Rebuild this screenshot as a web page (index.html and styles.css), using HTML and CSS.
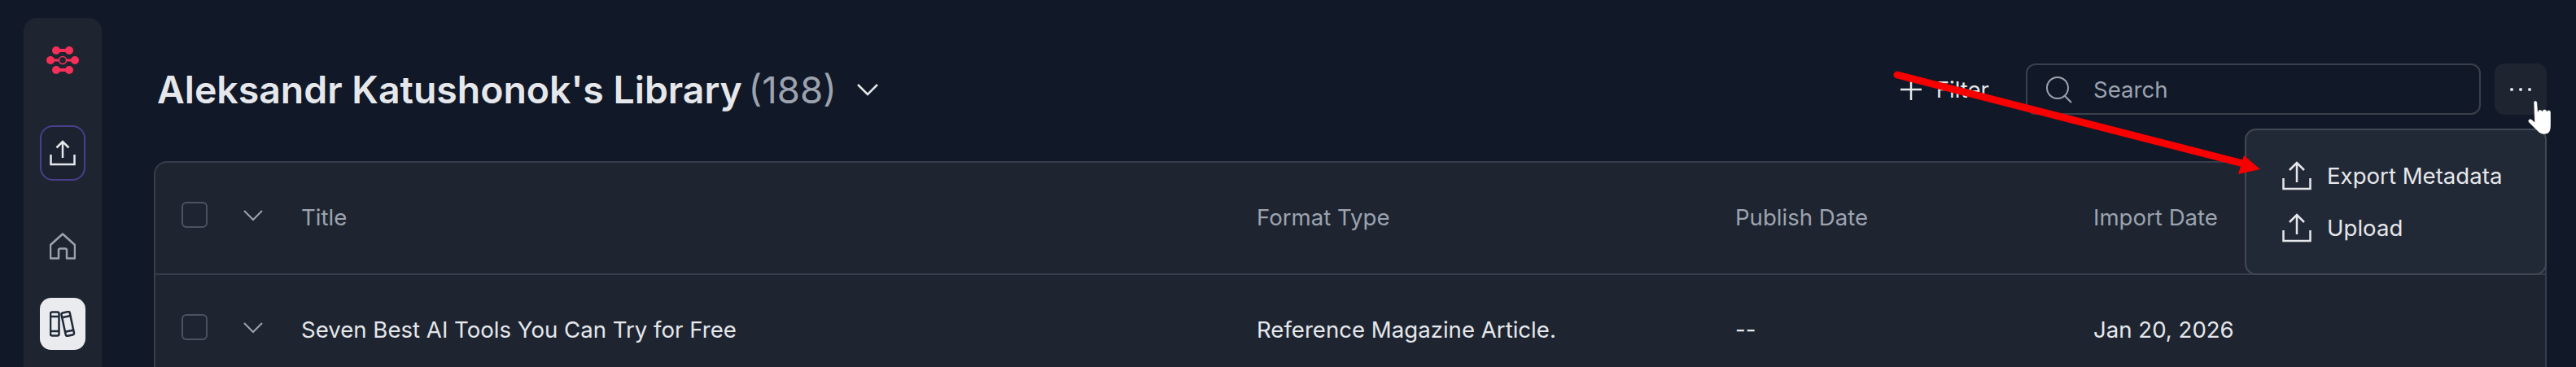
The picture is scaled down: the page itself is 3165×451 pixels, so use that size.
FILE: index.html
```html
<!DOCTYPE html>
<html lang="en">
<head>
    <meta charset="UTF-8">
    <title>Library</title>
    <link rel="stylesheet" href="styles.css">
</head>
<body>
    <div class="app">
        <nav class="sidebar">
            <svg class="logo" width="40" height="36" viewBox="0 0 40 36">
                <g fill="#f43058">
                    <circle cx="12" cy="6" r="5"/><circle cx="28" cy="6" r="5"/><rect x="12" y="4" width="16" height="4"/>
                    <circle cx="5" cy="18" r="5"/><circle cx="35" cy="18" r="5"/><rect x="5" y="16.500" width="30" height="3"/>
                    <circle cx="12" cy="30" r="5"/><circle cx="28" cy="30" r="5"/><rect x="12" y="28" width="16" height="4"/>
                </g>
                <circle cx="20" cy="18" r="4.500" fill="#1e2531" stroke="#f43058" stroke-width="1.500"/>
            </svg>
            <button class="nav-btn nav-upload">
                <svg width="32" height="32" viewBox="0 0 32 32" fill="none" stroke="#e5e7eb" stroke-width="2.500">
                    <path d="M1.500 18v12h29V18M16 22V2M8.500 9.500 16 2l7.500 7.500"/>
                </svg>
            </button>
            <a class="nav-home">
                <svg width="32" height="33" viewBox="0 0 32 33" fill="none" stroke="#9ca3af" stroke-width="2.500" stroke-linejoin="round">
                    <path d="M16 1.500 31 15v16.500H21V21.500a2 2 0 0 0-2-2h-6a2 2 0 0 0-2 2v10H1V15z"/>
                </svg>
            </a>
            <a class="nav-library">
                <svg width="32" height="32" viewBox="0 0 32 32" fill="none" stroke="#1f2937" stroke-width="2.500" stroke-linejoin="round">
                    <rect x="1" y="1.500" width="10.500" height="29" rx="2"/>
                    <path d="M1 7h10.500M1 25h10.500"/>
                    <g transform="rotate(-12 22 16)">
                        <rect x="17" y="1.500" width="10.500" height="29" rx="2"/>
                        <path d="M17 7h10.500M17 25h10.500"/>
                    </g>
                </svg>
            </a>
        </nav>

        <main class="main">
            <header class="topbar">
                <h1 class="heading">Aleksandr Katushonok's Library <span class="count">(188)</span></h1>
                <svg class="heading-chevron" width="28" height="16" viewBox="0 0 28 16" fill="none" stroke="#e5e7eb" stroke-width="2.500">
                    <path d="M2 2l12 12L26 2"/>
                </svg>
                <div class="filter">
                    <svg width="28" height="28" viewBox="0 0 28 28" stroke="#e5e7eb" stroke-width="2.500"><path d="M14 1v26M1 14h26"/></svg>
                    <span>Filter</span>
                </div>
                <div class="search">
                    <svg width="34" height="34" viewBox="0 0 34 34" fill="none" stroke="#9ca3af" stroke-width="2">
                        <circle cx="15" cy="15" r="13"/><path d="M24 25l8 8"/>
                    </svg>
                    <span>Search</span>
                </div>
                <button class="more"><i></i><i></i><i></i></button>
            </header>

            <section class="table">
                <div class="row row-head">
                    <span class="check"></span>
                    <svg class="chev" width="24" height="14" viewBox="0 0 24 14" fill="none" stroke="#9ca3af" stroke-width="2"><path d="M1 1l11 11L23 1"/></svg>
                    <span>Title</span>
                    <span>Format Type</span>
                    <span>Publish Date</span>
                    <span>Import Date</span>
                </div>
                <div class="row row-body">
                    <span class="check"></span>
                    <svg class="chev" width="24" height="14" viewBox="0 0 24 14" fill="none" stroke="#9ca3af" stroke-width="2"><path d="M1 1l11 11L23 1"/></svg>
                    <span>Seven Best AI Tools You Can Try for Free</span>
                    <span>Reference Magazine Article.</span>
                    <span>--</span>
                    <span>Jan 20, 2026</span>
                </div>
            </section>
        </main>
    </div>

    <div class="menu">
        <div class="menu-item">
            <svg width="36" height="36" viewBox="0 0 36 36" fill="none" stroke="#e5e7eb" stroke-width="2.500">
                <path d="M1.500 21v13h33V21M18 26V2M9 11l9-9 9 9"/>
            </svg>
            <span>Export Metadata</span>
        </div>
        <div class="menu-item">
            <svg width="36" height="36" viewBox="0 0 36 36" fill="none" stroke="#e5e7eb" stroke-width="2.500">
                <path d="M1.500 21v13h33V21M18 26V2M9 11l9-9 9 9"/>
            </svg>
            <span>Upload</span>
        </div>
    </div>

    <!-- annotation drawn over the screenshot -->
    <svg class="arrow" width="460" height="134" viewBox="2325 84 460 134">
        <path d="M2331 92 2760 202" stroke="#f60000" stroke-width="9" stroke-linecap="round"/>
        <path d="M2757 191 2777 208 2750 214z" fill="#f60000"/>
    </svg>

    <svg class="cursor" width="37" height="49" viewBox="240 150 110 145">
        <path d="M279 166q6-10 12 0l3 36q0-8 8-8 6 0 8 6 1-7 9-7 6 0 8 7 2-5 8-4 6 1 6 8v50q0 22-13 27-18 6-30-4l-38-38q-4-6 2-10 6-3 12 3l8 7z" fill="#fff" stroke="#111827" stroke-width="1"/>
    </svg>
</body>
</html>
```

FILE: styles.css
```css
* {
    box-sizing: border-box;
}
html, body {
    height: 451px;
    margin: 0;
    overflow: hidden;
}
body {
    position: relative;
    background-color: #111827;
    color: #e5e7eb;
    font-family: Inter, "Liberation Sans", sans-serif;
}
.app {
    display: flex;
    height: 451px;
    overflow: hidden;
}
.sidebar {
    flex: none;
    display: flex;
    flex-direction: column;
    align-items: center;
    width: 96px;
    margin: 22px 0 0 29px;
    padding-top: 34px;
    background-color: #1e2531;
    border-radius: 16px 16px 0 0;
}
.nav-btn {
    display: flex;
    align-items: center;
    justify-content: center;
    width: 56px;
    height: 68px;
    margin-top: 62px;
    padding: 0;
    background-color: #1c2230;
    border: 2px solid #4a3f8a;
    border-radius: 16px;
}
.nav-home {
    display: block;
    height: 33px;
    margin-top: 64px;
}
.nav-library {
    display: flex;
    align-items: center;
    justify-content: center;
    flex: none;
    width: 56px;
    height: 64px;
    margin-top: 47px;
    background-color: #e9ebee;
    border-radius: 14px;
}
.main {
    flex: 1;
    min-width: 0;
    margin: 0 36px 0 64px;
}
.topbar {
    display: flex;
    align-items: center;
    height: 198px;
    padding-bottom: 57px;
    padding-top: 78px;
}
.heading {
    margin: 0 0 0 4px;
    font-size: 46.400px;
    font-weight: 600;
    white-space: nowrap;
}
.count {
    margin-left: -4px;
    color: #9ca3af;
    font-size: 45.600px;
    font-weight: 400;
}
.heading-chevron {
    margin-left: 24px;
}
.filter {
    display: flex;
    align-items: center;
    gap: 17px;
    margin-left: auto;
    font-size: 27.600px;
}
.search {
    display: flex;
    align-items: center;
    gap: 25px;
    width: 559px;
    height: 63px;
    margin-left: 45px;
    padding-left: 22px;
    border: 2px solid #3a404c;
    border-radius: 12px;
    color: #9ca3af;
    font-size: 27.600px;
}
.more {
    display: flex;
    align-items: center;
    justify-content: center;
    gap: 7px;
    width: 64px;
    height: 63px;
    margin-left: 17px;
    padding: 0;
    background-color: #1e2531;
    border: 0;
    border-radius: 12px;
}
.more i {
    width: 4px;
    height: 4px;
    background-color: #e5e7eb;
    border-radius: 50%;
}
.table {
    background-color: #1e2531;
    border: 2px solid #373e4b;
    border-bottom: 0;
    border-radius: 16px 16px 0 0;
    font-size: 27.600px;
}
.row {
    display: grid;
    grid-template-columns: 76px 71px 1174px 588px 440px 1fr;
    align-items: center;
    padding-left: 32px;
    white-space: nowrap;
}
.row-head {
    height: 138px;
    padding-bottom: 2px;
    border-bottom: 2px solid #373e4b;
    color: #9ca3af;
}
.row-body {
    height: 113px;
    padding-top: 21px;
}
.check {
    width: 32px;
    height: 32px;
    margin-bottom: 6px;
    border: 2px solid #4b5260;
    border-radius: 6px;
}
.chev {
    margin-bottom: 4px;
}
.menu {
    position: absolute;
    top: 158px;
    left: 2758px;
    display: flex;
    flex-direction: column;
    gap: 28px;
    width: 371px;
    height: 180px;
    padding: 38px 0 0 44px;
    background-color: #222936;
    border: 2px solid #414853;
    border-radius: 14px;
    font-size: 27.600px;
}
.menu-item {
    display: flex;
    align-items: center;
    gap: 19px;
    height: 36px;
}
.arrow {
    position: absolute;
    top: 84px;
    left: 2325px;
}
.cursor {
    position: absolute;
    top: 120px;
    left: 3100px;
}
```
